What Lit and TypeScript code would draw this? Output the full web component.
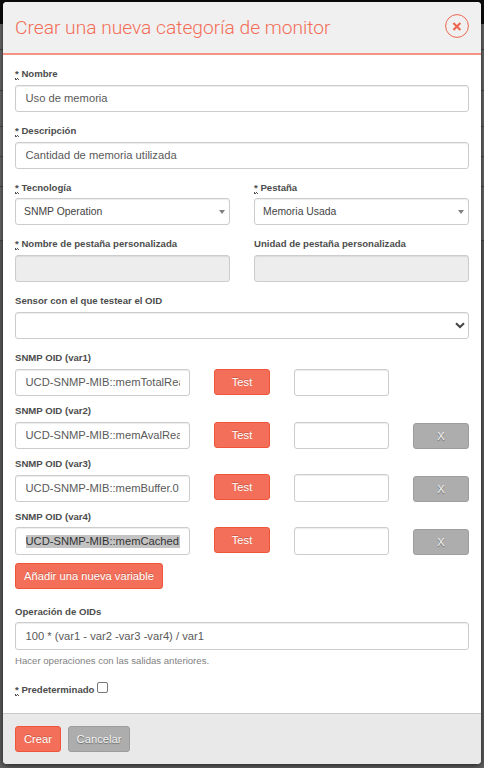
import { LitElement, html, css, nothing } from "lit";
import { customElement } from "lit/decorators.js";

@customElement("app-root")
export class AppRoot extends LitElement {
  static styles = css`
    :host {
      display: block;
      width: 484px;
      height: 768px;
      overflow: hidden;
      box-sizing: border-box;
      padding: 2px 3px 4px;
      font-family: "Liberation Sans", Arial, sans-serif;
      font-size: 11.2px;
      color: #4d4d4d;
      background:
        linear-gradient(#4c4c4c, #4c4c4c) 0 49px / 100% 1px no-repeat,
        linear-gradient(#4c4c4c, #4c4c4c) 0 90px / 100% 1px no-repeat,
        linear-gradient(#4c4c4c, #4c4c4c) 0 126px / 100% 1px no-repeat,
        linear-gradient(#4c4c4c, #4c4c4c) 0 156px / 100% 1px no-repeat,
        linear-gradient(#4c4c4c, #4c4c4c) 0 186px / 100% 1px no-repeat,
        linear-gradient(#4c4c4c, #4c4c4c) 0 240px / 100% 1px no-repeat,
        linear-gradient(#0c0c0c 24px, #6e6e6e 24px, #6e6e6e 240px, #606160 240px);
    }
    * { box-sizing: border-box; }
    .modal {
      height: 762px;
      display: flex;
      flex-direction: column;
      background: #fff;
      border-radius: 4px;
      overflow: hidden;
      box-shadow: 0 1px 6px rgba(0, 0, 0, 0.75);
    }
    header {
      flex: none;
      height: 53px;
      padding: 0 12px 3px;
      display: flex;
      align-items: center;
      justify-content: space-between;
      background: #f0f0f0;
      border-bottom: 2px solid #f39482;
    }
    h1 {
      margin: 0;
      font: 300 19.2px/24px Roboto, sans-serif;
      color: #f36c56;
      padding-top: 4px;
    }
    .close { width: 24px; height: 24px; padding: 0; border: 0; background: none; display: block; margin-top: -1px; }
    .close svg { display: block; }
    .body {
      flex: 1;
      padding: 13px 12px 0;
      display: grid;
      grid-template-rows: 57px 57px 56px 57px 57px 53px 53px 53px 52px 43px 44px 34px 1fr;
      align-content: start;
    }
    .pair { display: grid; grid-template-columns: 215px 215px; column-gap: 24px; }
    .oid { display: grid; grid-template-columns: 175px 56px 95px 56px; column-gap: 24px; align-items: start; }
    label {
      display: block;
      height: 17px;
      line-height: 12px;
      font-size: 9.6px;
      font-weight: bold;
      white-space: nowrap;
    }
    .snug label { height: 16px; }
    abbr { text-decoration: underline dotted 1px; text-underline-offset: 1px; border-bottom: 1px dotted #555; }
    .input, .select {
      display: flex;
      align-items: center;
      height: 27px;
      width: 100%;
      padding: 0 9px;
      border: 1px solid #ccc;
      border-radius: 3px;
      box-shadow: inset 0 1px 1px rgba(0, 0, 0, 0.075);
      background: #fff;
      color: #5a5a5a;
      white-space: nowrap;
      padding-left: 9.5px;
    }
    .input span { flex: 1; min-width: 0; overflow: hidden; line-height: 13px; }
    .tall .input { height: 28px; }
    .disabled { background: #ededed; }
    .select { justify-content: space-between; padding: 0 4px 0 8px; font-size: 10.4px; color: #444; }
    .select i { border: 3.5px solid transparent; border-top: 4px solid #808080; border-bottom: 0; margin-top: 1px; }
    .native { padding-right: 3px; justify-content: flex-end; }
    .input .selected { background: #c3c3c3; color: #333; }
    .btn {
      display: flex;
      align-items: center;
      justify-content: center;
      height: 26px;
      padding: 0 8px 1px;
      border: 1px solid #ee553a;
      border-radius: 3px;
      background: #f36f59;
      color: #fff;
      font: 11.2px/14px "Liberation Sans", Arial, sans-serif;
      text-shadow: 0 -1px 0 rgba(0, 0, 0, 0.2);
      white-space: nowrap;
    }
    .gray { background: #adadad; border-color: #9d9d9d; color: #f2f2f2; text-shadow: 0 1px 1px rgba(0, 0, 0, 0.4); }
    .top { margin-top: 17px; }
    .snug .top { margin-top: 16px; }
    .early .test { margin-top: 16px; }
    .early .result { margin-top: 16px; height: 28px; }
    .low { margin-top: 18px; }
    .add { justify-self: start; width: 148px; }
    .help { padding-top: 5px; font-size: 9.6px; line-height: 12px; color: #828282; }
    .check { display: flex; }
    .box { width: 11px; height: 11px; margin: -2px 0 0 3px; border: 1px solid #767676; border-radius: 2px; background: #fff; }
    footer {
      flex: none;
      height: 51px;
      padding: 12px 12px 0;
      display: flex;
      gap: 7px;
      background: #e9e9e9;
      border-top: 1px solid #c9cbca;
    }
    .create { width: 46px; }
    .cancel { width: 62px; }
  `;

  private label(text: string, required = false) {
    return html`<label>${required ? html`<abbr>*</abbr> ` : nothing}${text}</label>`;
  }

  private field(text: string, value: string, required = false) {
    return html`<div>${this.label(text, required)}<div class="input"><span>${value}</span></div></div>`;
  }

  private picker(text: string, value: string) {
    return html`<div>${this.label(text, true)}<div class="select">${value}<i></i></div></div>`;
  }

  private oid(n: number, value: string) {
    const mode = n === 3 ? "early" : n === 4 ? "snug tall" : "";
    return html`<div class="oid ${mode}">
      <div>
        ${this.label(`SNMP OID (var${n})`)}
        <div class="input"><span class=${n === 4 ? "selected" : ""}>${value}</span></div>
      </div>
      <button class="btn top test">Test</button>
      <div class="input top result"></div>
      ${n > 1 ? html`<button class="btn gray low">X</button>` : nothing}
    </div>`;
  }

  render() {
    return html`<div class="modal">
      <header>
        <h1>Crear una nueva categoría de monitor</h1>
        <button class="close" aria-label="Cerrar">
          <svg width="24" height="24" viewBox="0 0 24 24" fill="none" stroke="#ee654e">
            <circle cx="12" cy="12" r="11.4" />
            <path d="M8.4 8.9 L15.4 15.9 M15.4 8.9 L8.4 15.9" stroke-width="2.1" />
          </svg>
        </button>
      </header>
      <div class="body">
        ${this.field("Nombre", "Uso de memoria", true)}
        ${this.field("Descripción", "Cantidad de memoria utilizada", true)}
        <div class="pair snug">
          ${this.picker("Tecnología", "SNMP Operation")}
          ${this.picker("Pestaña", "Memoria Usada")}
        </div>
        <div class="pair">
          <div>${this.label("Nombre de pestaña personalizada", true)}<div class="input disabled"></div></div>
          <div>${this.label("Unidad de pestaña personalizada")}<div class="input disabled"></div></div>
        </div>
        <div>
          ${this.label("Sensor con el que testear el OID")}
          <div class="input native">
            <svg width="10" height="7" viewBox="0 0 10 7" fill="none" stroke="#444" stroke-width="2">
              <path d="M1 1.2 L5 5 L9 1.2" />
            </svg>
          </div>
        </div>
        ${this.oid(1, "UCD-SNMP-MIB::memTotalReal.0")}
        ${this.oid(2, "UCD-SNMP-MIB::memAvalReal.0")}
        ${this.oid(3, "UCD-SNMP-MIB::memBuffer.0")}
        ${this.oid(4, "UCD-SNMP-MIB::memCached.0")}
        <button class="btn add">Añadir una nueva variable</button>
        <div class="snug tall">${this.field("Operación de OIDs", "100 * (var1 - var2 -var3 -var4) / var1")}</div>
        <div class="help">Hacer operaciones con las salidas anteriores.</div>
        <div class="check">${this.label("Predeterminado", true)}<span class="box"></span></div>
      </div>
      <footer>
        <button class="btn create">Crear</button>
        <button class="btn gray cancel">Cancelar</button>
      </footer>
    </div>`;
  }
}
